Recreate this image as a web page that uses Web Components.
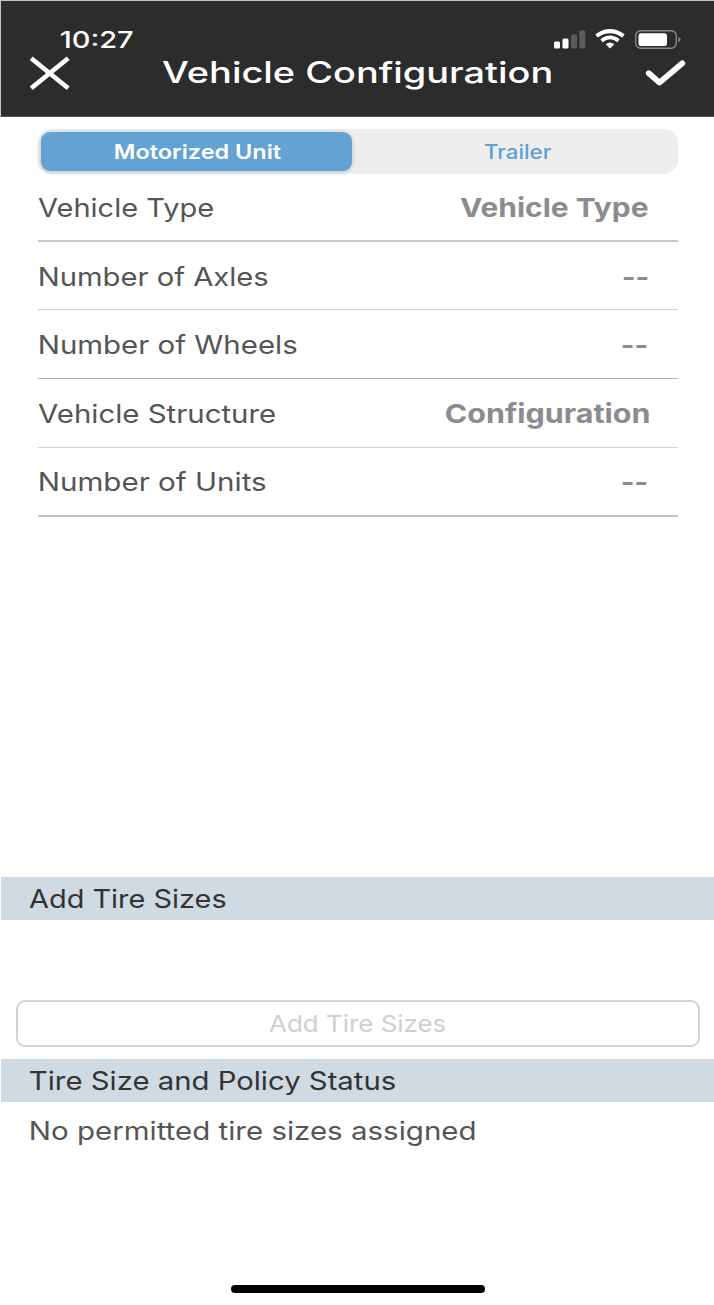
<!DOCTYPE html>
<html lang="en"><head><meta charset="utf-8"><title>Vehicle Configuration</title>
<style>
html,body{margin:0;padding:0;background:#fff}
body{font-family:Inter,"Liberation Sans",sans-serif}
</style></head><body>
<vehicle-screen></vehicle-screen>
<script>
const attach=(el,html)=>{const r=el.attachShadow({mode:'open'});const t=document.createElement('template');t.innerHTML=html;r.append(t.content.cloneNode(true));return r};

/* One line of text whose glyphs are stretched to span exactly `width` pixels. */
customElements.define('wide-text',class extends HTMLElement{
  connectedCallback(){
    if(this.shadowRoot)return;
    const w=+this.getAttribute('width'),size=+this.getAttribute('size'),weight=this.getAttribute('weight')||'400';
    const r=attach(this,`<style>:host{display:block;flex:none;width:${w}px;font-size:${size}px;font-weight:${weight};line-height:40px;height:40px;white-space:nowrap}
    span{display:inline-block;transform-origin:0 50%;line-height:40px;vertical-align:top}</style><span><slot></slot></span>`);
    const ctx=document.createElement('canvas').getContext('2d');
    ctx.font=`${weight} ${size}px Inter, "Liberation Sans", sans-serif`;
    const m=ctx.measureText(this.textContent);
    const s=w/(m.actualBoundingBoxRight+m.actualBoundingBoxLeft);
    r.querySelector('span').style.transform=`translateX(${m.actualBoundingBoxLeft*s}px) scaleX(${s})`;
  }
});

customElements.define('status-bar',class extends HTMLElement{
  constructor(){super();attach(this,`<style>
  :host{display:flex;height:37px;padding:19px 33px 0 60px;justify-content:space-between;color:#fff;box-sizing:border-box}
  svg{display:block;margin-top:7px}</style>
  <wide-text width="72.5" size="23" weight="500">10:27</wide-text>
  <svg width="128" height="24" viewBox="553 26.5 128 24" fill="#fff">
    <rect x="554" y="41" width="6" height="7" rx="1.5"/><rect x="562.5" y="38" width="6" height="10" rx="1.5"/>
    <g fill="#5b5b5b"><rect x="571" y="34" width="6" height="14" rx="1.5"/><rect x="579.3" y="30" width="6" height="18" rx="1.5"/></g>
    <g fill="none" stroke="#fff"><path d="M596.5 35.4Q610 25.8 623.5 35.4" stroke-width="4"/><path d="M601.5 40.2Q610 33.6 618.5 40.2" stroke-width="3.7"/></g>
    <path d="M605.8 43.7Q610 40.5 614.3 43.7L610.7 47.5Q610 48.1 609.3 47.5Z"/>
    <rect x="635.7" y="30.2" width="40.6" height="17.6" rx="5" fill="none" stroke="#898989" stroke-width="1.4"/>
    <rect x="638.5" y="32.7" width="28.5" height="12.7" rx="2.5"/>
    <path d="M678.3 36.5Q680.6 37.3 680.6 39T678.3 41.7Z" fill="#898989"/>
  </svg>`)}
});

customElements.define('nav-bar',class extends HTMLElement{
  connectedCallback(){
    if(this.shadowRoot)return;
    attach(this,`<style>
  :host{display:grid;grid-template-columns:132px 390px 1fr;height:78px;color:#fff;padding:0 0 0 29px;box-sizing:border-box}
  wide-text{margin-top:14px}svg{display:block}.done{justify-self:end;margin-right:28px}</style>
  <svg width="40" height="54" viewBox="30.3 38 40 54" fill="none" stroke="#fff" stroke-width="4.6"><path d="M31.5 58.3L68.5 88.3M68.5 58.3L31.5 88.3"/></svg>
  <wide-text width="389" size="29.5" weight="500">${this.getAttribute('heading')}</wide-text>
  <svg class="done" width="42" height="54" viewBox="644 38 42 54" fill="none" stroke="#fff" stroke-width="5.8" stroke-linecap="round" stroke-linejoin="round"><path d="M648.8 73.2L659.5 82.6L682.3 63.3"/></svg>`);
  }
});

customElements.define('segmented-control',class extends HTMLElement{
  constructor(){super();attach(this,`<style>
  :host{display:grid;grid-template-columns:311px 1fr;margin:12px 36px 0 38px;padding:3px;height:44.5px;box-sizing:border-box;background:#eee;border-radius:14px}
  div{display:flex;justify-content:center;align-items:flex-start;height:38.5px;color:#5f9fd3}
  .on{background:#64a2d4;color:#fff;border-radius:9px;box-shadow:0 1px 5px rgba(0,0,0,.2)}
  .on wide-text{margin-left:3px}.off wide-text{margin-left:8px}</style>
  <div class="on"><wide-text width="166" size="20.2" weight="600">Motorized Unit</wide-text></div>
  <div class="off"><wide-text width="67.5" size="20.2" weight="500">Trailer</wide-text></div>`)}
});

customElements.define('field-row',class extends HTMLElement{
  connectedCallback(){
    if(this.shadowRoot)return;const g=a=>this.getAttribute(a);
    attach(this,`<style>:host{display:flex;justify-content:space-between;box-sizing:border-box;margin:0 36px 0 38px;padding:${g('top')}px ${g('end')}px 0 ${g('start')}px;height:${g('height')}px;border-bottom:${g('rule')}}
    .l{color:#555}.v{color:#8b8b90}</style>
    <wide-text class="l" width="${g('lw')}" size="25.8">${g('label')}</wide-text>
    <wide-text class="v" width="${g('vw')}" size="26" weight="700">${g('value')}</wide-text>`);
  }
});

customElements.define('section-bar',class extends HTMLElement{
  connectedCallback(){
    if(this.shadowRoot)return;
    attach(this,`<style>:host{display:block;box-sizing:border-box;height:43px;margin-left:1px;padding:2px 0 0 ${this.getAttribute('start')}px;background:#d0dae3;color:#333}</style>
    <wide-text width="${this.getAttribute('width')}" size="25.8">${this.getAttribute('label')}</wide-text>`);
  }
});

customElements.define('outline-button',class extends HTMLElement{
  constructor(){super();attach(this,`<style>:host{display:block;margin:80px 14.5px 0 15.5px}
  button{all:unset;display:flex;justify-content:center;box-sizing:border-box;width:100%;height:47px;border:2px solid #d3d3d3;border-radius:9px;padding-top:1.5px;color:#cfcfcf}</style>
  <button disabled><wide-text width="177" size="23.2">Add Tire Sizes</wide-text></button>`)}
});

customElements.define('vehicle-screen',class extends HTMLElement{
  constructor(){super();attach(this,`<style>
  :host{display:flex;flex-direction:column;width:714px;height:1305px;overflow:hidden;background:#fff}
  header{display:block;box-sizing:border-box;height:117px;background:#2c2c2c;border-top:1px solid #c3c6c5;border-left:1px solid #c3c6c5;border-bottom:1px solid #555}
  .note{color:#555;padding:9px 0 0 30.5px}
  .home{margin:auto auto 12px 231px;width:254px;height:8px;border-radius:4px;background:#000}</style>
  <header><status-bar></status-bar><nav-bar heading="Vehicle Configuration"></nav-bar></header>
  <main>
  <segmented-control></segmented-control>
  <section style="height:703.5px">
    <field-row label="Vehicle Type" lw="175" start="0" value="Vehicle Type" vw="188" end="30.5" top="14.5" height="68.5" rule="2px solid #c8c8c8"></field-row>
    <field-row label="Number of Axles" lw="228" start="1.5" value="--" vw="25" end="30" top="14.5" height="68" rule="1px solid #d2d2d2"></field-row>
    <field-row label="Number of Wheels" lw="257" start="1.5" value="--" vw="25" end="31" top="14.5" height="69" rule="1px solid #b4b4b4"></field-row>
    <field-row label="Vehicle Structure" lw="237" start="0" value="Configuration" vw="203" end="29" top="14.5" height="69" rule="1px solid #d2d2d2"></field-row>
    <field-row label="Number of Units" lw="226" start="1.5" value="--" vw="25" end="31" top="14" height="69" rule="2px solid #c4c4c4"></field-row>
  </section>
  <section-bar label="Add Tire Sizes" width="197" start="28"></section-bar>
  <outline-button></outline-button>
  <section-bar label="Tire Size and Policy Status" width="365.5" start="29" style="margin-top:12px"></section-bar>
  <div class="note"><wide-text width="443.5" size="25.8">No permitted tire sizes assigned</wide-text></div>
  </main>
  <div class="home"></div>`)}
});
</script></body></html>
